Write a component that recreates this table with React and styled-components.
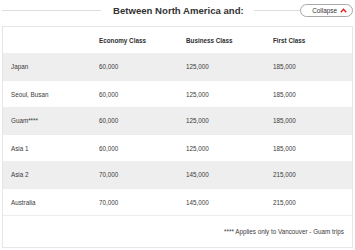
import React from "react";
import styled, { createGlobalStyle } from "styled-components";

const GlobalStyle = createGlobalStyle`
  html, body {
    margin: 0;
    padding: 0;
    background: #ffffff;
  }
  body {
    font-family: "Liberation Sans", Arial, Helvetica, sans-serif;
    color: #333333;
  }
`;

const Page = styled.div`
  width: 355px;
  padding: 0 2px;
  box-sizing: border-box;
`;

const TitleBar = styled.div`
  display: flex;
  align-items: center;
  height: 20px;
  margin-bottom: 6px;
`;

const Rule = styled.div`
  flex: ${(p) => (p.grow ? 1 : "none")};
  width: ${(p) => (p.grow ? "auto" : p.w + "px")};
  height: 1px;
  background: #dddddd;
`;

const Title = styled.h2`
  margin: 0 10px 0 12px;
  font-size: 9.6px;
  font-weight: bold;
  color: #333333;
  white-space: nowrap;
  letter-spacing: 0;
`;

const CollapseButton = styled.button`
  display: flex;
  align-items: center;
  justify-content: flex-end;
  gap: 3px;
  width: 53px;
  height: 13px;
  padding: 0 5px 0 0;
  margin: 0;
  border: 1px solid #a8a8a8;
  border-radius: 7px;
  background: #ffffff;
  font-family: "Liberation Sans", Arial, sans-serif;
  font-size: 6.4px;
  color: #333333;
  cursor: pointer;
  box-sizing: border-box;
`;

const Table = styled.div`
  border: 1px solid #e6e6e6;
  background: #ffffff;
`;

const Row = styled.div`
  display: grid;
  grid-template-columns: 88px 87px 87px 1fr;
  align-items: center;
  height: ${(p) => p.h || 27}px;
  background: ${(p) => (p.shaded ? "#eeeeee" : "#ffffff")};
  border-top: ${(p) => (p.line ? "1px solid #ececec" : "none")};
  box-sizing: border-box;
  font-size: 6.3px;
  color: #3a3a3a;
`;

const Cell = styled.div`
  padding-left: 8px;
  font-weight: ${(p) => (p.head ? "bold" : "normal")};
  color: ${(p) => (p.head ? "#2e2e2e" : "#3a3a3a")};
  white-space: nowrap;
`;

const Footnote = styled.div`
  display: flex;
  align-items: center;
  justify-content: flex-end;
  height: 31px;
  padding-right: 8px;
  border-top: 1px solid #ececec;
  font-size: 6.3px;
  color: #3a3a3a;
`;

const rows = [
  ["Japan", "60,000", "125,000", "185,000"],
  ["Seoul, Busan", "60,000", "125,000", "185,000"],
  ["Guam****", "60,000", "125,000", "185,000"],
  ["Asia 1", "60,000", "125,000", "185,000"],
  ["Asia 2", "70,000", "145,000", "215,000"],
  ["Australia", "70,000", "145,000", "215,000"],
];

export default function App() {
  return (
    <Page>
      <GlobalStyle />
      <TitleBar>
        <Rule w={99} />
        <Title>Between North America and:</Title>
        <Rule grow />
        <CollapseButton>
          Collapse
          <svg width="7" height="5" viewBox="0 0 7 5">
            <path d="M0.8 4.2 L3.5 1.2 L6.2 4.2" fill="none" stroke="#dd2222" strokeWidth="1.4" />
          </svg>
        </CollapseButton>
      </TitleBar>
      <Table>
        <Row h={26}>
          <Cell />
          <Cell head>Economy Class</Cell>
          <Cell head>Business Class</Cell>
          <Cell head>First Class</Cell>
        </Row>
        {rows.map((r, i) => (
          <Row key={r[0]} shaded={i % 2 === 0} line={i % 2 === 1 && i > 0}>
            {r.map((c, j) => (
              <Cell key={j}>{c}</Cell>
            ))}
          </Row>
        ))}
        <Footnote>**** Applies only to Vancouver - Guam trips</Footnote>
      </Table>
    </Page>
  );
}
